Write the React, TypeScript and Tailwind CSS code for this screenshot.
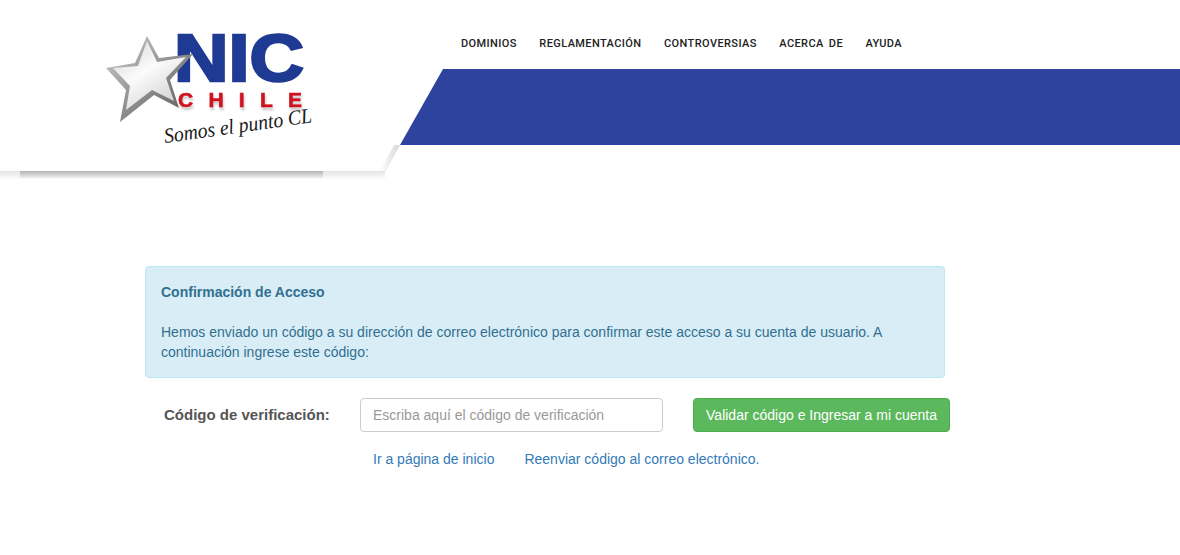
import { memo } from "react";

const NAV = ["DOMINIOS", "REGLAMENTACIÓN", "CONTROVERSIAS", "ACERCA DE", "AYUDA"];

/* Star + wordmark, text stays real <text> */
const Logo = memo(function Logo() {
  return (
    <svg width="240" height="135" viewBox="0 0 240 135" className="block">
      <defs>
        <linearGradient id="star" x1="0.1" y1="0" x2="0.8" y2="1">
          <stop offset="0" stopColor="#d4d4d4" />
          <stop offset="0.45" stopColor="#fbfbfb" />
          <stop offset="1" stopColor="#cfcfcf" />
        </linearGradient>
        <linearGradient id="rim" x1="0" y1="0" x2="1" y2="1">
          <stop offset="0" stopColor="#d0d0d0" />
          <stop offset="1" stopColor="#555555" />
        </linearGradient>
      </defs>
      <text
        x="84"
        y="61"
        textLength="130"
        lengthAdjust="spacingAndGlyphs"
        fontFamily="'Liberation Sans', Arial, sans-serif"
        fontWeight="700"
        fontSize="66"
        fill="#1f3a93"
        stroke="#1f3a93"
        strokeWidth="2.5"
      >
        NIC
      </text>
      <polygon
        points="57,16 69,38 103,34 80,60 89,88 64,75 30,102 36,70 16,48 45,43"
        fill="url(#rim)"
      />
      <polygon
        points="57,21 67,42 96,37 76,58 84,81 62,70 36,90 40,66 23,48 48,46"
        fill="url(#star)"
      />
      <text
        x="88"
        y="87"
        textLength="124"
        lengthAdjust="spacing"
        fontFamily="'Liberation Sans', Arial, sans-serif"
        fontWeight="700"
        fontSize="21"
        fill="#d0121f"
        stroke="#d0121f"
        strokeWidth="0.6"
        className="[filter:drop-shadow(1px_3px_1px_rgba(0,0,0,0.2))]"
      >
        CHILE
      </text>
      <text
        x="75"
        y="123"
        transform="rotate(-8 75 123)"
        fontFamily="'Liberation Serif', serif"
        fontStyle="italic"
        fontSize="21"
        textLength="149"
        lengthAdjust="spacingAndGlyphs"
        fill="#1a1a1a"
      >
        Somos el punto CL
      </text>
    </svg>
  );
});

export default function App() {
  return (
    <div className="min-h-[555px] bg-white font-['Liberation_Sans',Arial,sans-serif] text-sm text-[#333]">
      <header className="relative flex h-[180px]">
        <div className="w-[400px] shrink-0">
          <div className="h-[171px] pl-[90px] pt-[20px]">
            <Logo />
          </div>
          <div className="h-[9px] w-[385px] bg-gradient-to-b from-[#e4e4e4] to-white">
            <div className="ml-[20px] h-[7px] w-[303px] bg-gradient-to-b from-[#b4b4b4] to-[#f0f0f0]" />
          </div>
        </div>
        <div className="flex-1">
          <nav className="flex h-[69px] items-start gap-[22.5px] pl-[61px] pt-[37px] font-['Roboto',sans-serif] text-[11px] font-medium leading-[13px] tracking-[0.4px] text-[#222] [word-spacing:2px]">
            {NAV.map((item) => (
              <a key={item} href="#">
                {item}
              </a>
            ))}
          </nav>
          <div className="h-[76px] bg-[#2e439e] [clip-path:polygon(43px_0,100%_0,100%_100%,0_100%)]" />
        </div>
        {/* fold shadow beside the slanted corner */}
        <svg width="24" height="30" viewBox="0 0 24 30" className="absolute left-[380px] top-[145px]">
          <defs>
            <linearGradient id="fold" x1="0" y1="0" x2="1" y2="0">
              <stop offset="0" stopColor="#ffffff" />
              <stop offset="1" stopColor="#d6d6d6" />
            </linearGradient>
          </defs>
          <polygon points="14,0 20,0 6,26 0,26" fill="url(#fold)" />
        </svg>
      </header>

      <main className="ml-[145px] mt-[86px] w-[805px]">
        <div className="w-[800px] rounded border border-[#bce8f1] bg-[#d9edf7] p-[15px] leading-5 text-[#31708f]">
          <p className="font-bold">Confirmación de Acceso</p>
          <p className="mt-5">
            Hemos enviado un código a su dirección de correo electrónico para confirmar este acceso a su cuenta de
            usuario. A continuación ingrese este código:
          </p>
        </div>
        <form className="mt-5 flex items-center">
          <label className="ml-[19px] w-[196px] text-[15px] font-bold text-[#555]">Código de verificación:</label>
          <input
            placeholder="Escriba aquí el código de verificación"
            className="h-[34px] w-[303px] rounded border border-[#ccc] px-3 text-sm text-[#555] placeholder:text-[#999]"
          />
          <button
            type="button"
            className="ml-[30px] h-[34px] w-[257px] rounded border border-[#4cae4c] bg-[#5cb85c] text-sm text-white"
          >
            Validar código e Ingresar a mi cuenta
          </button>
        </form>
        <div className="ml-[228px] mt-[17px] flex gap-[30px] leading-5 text-[#337ab7]">
          <a href="#">Ir a página de inicio</a>
          <a href="#">Reenviar código al correo electrónico.</a>
        </div>
      </main>
    </div>
  );
}
